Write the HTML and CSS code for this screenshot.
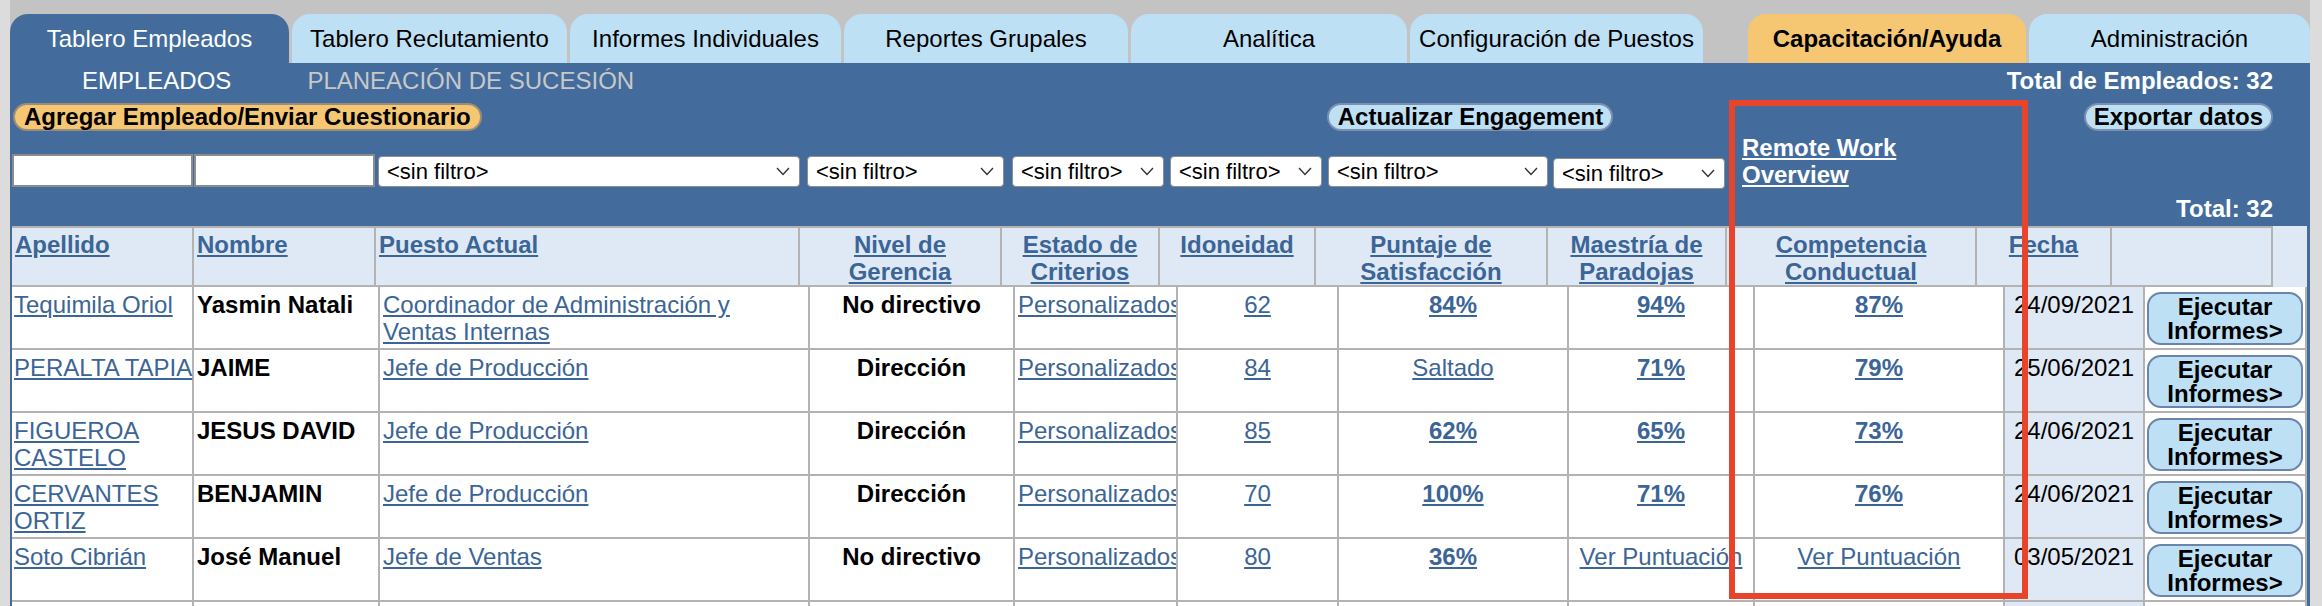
FILE: index.html
```html
<!DOCTYPE html>
<html lang="es">
<head>
    <meta charset="UTF-8">
    <meta name="viewport" content="width=device-width, initial-scale=1.0">
    <title>Tablero Empleados</title>
    <link rel="stylesheet" href="styles.css">
</head>
<body>
    <div class="app">
        <!-- Main tabs -->
        <nav class="tabs">
            <a class="tab tab-active w-emp" href="#">Tablero Empleados</a>
            <a class="tab w-rec" href="#">Tablero Reclutamiento</a>
            <a class="tab w-ind" href="#">Informes Individuales</a>
            <a class="tab w-grp" href="#">Reportes Grupales</a>
            <a class="tab w-ana" href="#">Analítica</a>
            <a class="tab w-conf" href="#">Configuración de Puestos</a>
            <a class="tab tab-help w-help" href="#">Capacitación/Ayuda</a>
            <a class="tab w-adm" href="#">Administración</a>
        </nav>

        <div class="panel">
            <div class="subnav">
                <span class="sub-item sub-current">EMPLEADOS</span>
                <span class="sub-item">PLANEACIÓN DE SUCESIÓN</span>
                <span class="count">Total de Empleados: 32</span>
            </div>

            <div class="actions">
                <button class="pill pill-orange">Agregar Empleado/Enviar Cuestionario</button>
                <button class="pill pill-blue engage">Actualizar Engagement</button>
                <button class="pill pill-blue export">Exportar datos</button>
            </div>

            <!-- Filter row -->
            <div class="filters">
                <input type="text" class="f-text">
                <input type="text" class="f-text">
                <span class="sel s-puesto">
                    <select><option>&lt;sin filtro&gt;</option></select>
                    <svg class="chev" width="14" height="9" viewBox="0 0 14 9"><path d="M1 1l6 6.5L13 1" fill="none" stroke="#333" stroke-width="1.4"/></svg>
                </span>
                <span class="sel s-nivel">
                    <select><option>&lt;sin filtro&gt;</option></select>
                    <svg class="chev" width="14" height="9" viewBox="0 0 14 9"><path d="M1 1l6 6.5L13 1" fill="none" stroke="#333" stroke-width="1.4"/></svg>
                </span>
                <span class="sel s-estado">
                    <select><option>&lt;sin filtro&gt;</option></select>
                    <svg class="chev" width="14" height="9" viewBox="0 0 14 9"><path d="M1 1l6 6.5L13 1" fill="none" stroke="#333" stroke-width="1.4"/></svg>
                </span>
                <span class="sel s-idon">
                    <select><option>&lt;sin filtro&gt;</option></select>
                    <svg class="chev" width="14" height="9" viewBox="0 0 14 9"><path d="M1 1l6 6.5L13 1" fill="none" stroke="#333" stroke-width="1.4"/></svg>
                </span>
                <span class="sel s-punt">
                    <select><option>&lt;sin filtro&gt;</option></select>
                    <svg class="chev" width="14" height="9" viewBox="0 0 14 9"><path d="M1 1l6 6.5L13 1" fill="none" stroke="#333" stroke-width="1.4"/></svg>
                </span>
                <span class="sel s-maes">
                    <select><option>&lt;sin filtro&gt;</option></select>
                    <svg class="chev" width="14" height="9" viewBox="0 0 14 9"><path d="M1 1l6 6.5L13 1" fill="none" stroke="#333" stroke-width="1.4"/></svg>
                </span>
                <a class="remote" href="#">Remote Work Overview</a>
            </div>

            <div class="total">Total: 32</div>

            <!-- Column headers -->
            <div class="head-wrap">
                <table class="head-table">
                    <colgroup>
                        <col class="h1"><col class="h2"><col class="h3"><col class="h4">
                        <col class="h5"><col class="h6"><col class="h7"><col class="h8">
                        <col class="h9"><col class="h10"><col class="h11">
                    </colgroup>
                    <tr>
                        <th class="left"><a href="#">Apellido</a></th>
                        <th class="left"><a href="#">Nombre</a></th>
                        <th class="left"><a href="#">Puesto Actual</a></th>
                        <th><a href="#">Nivel de Gerencia</a></th>
                        <th><a href="#">Estado de Criterios</a></th>
                        <th><a href="#">Idoneidad</a></th>
                        <th><a href="#">Puntaje de Satisfacción</a></th>
                        <th><a href="#">Maestría de Paradojas</a></th>
                        <th><a href="#">Competencia Conductual</a></th>
                        <th><a href="#">Fecha</a></th>
                        <th></th>
                    </tr>
                </table>
            </div>

            <!-- Employees -->
            <table class="body-table">
                <colgroup>
                    <col class="b1"><col class="b2"><col class="b3"><col class="b4">
                    <col class="b5"><col class="b6"><col class="b7"><col class="b8">
                    <col class="b9"><col class="b10"><col class="b11">
                </colgroup>
                <tr>
                    <td><a href="#">Tequimila Oriol</a></td>
                    <td class="strong">Yasmin Natali</td>
                    <td><a href="#">Coordinador de Administración y Ventas Internas</a></td>
                    <td class="strong center">No directivo</td>
                    <td class="clip"><a href="#">Personalizados</a></td>
                    <td class="center"><a href="#">62</a></td>
                    <td class="center"><a class="pct" href="#">84%</a></td>
                    <td class="center"><a class="pct" href="#">94%</a></td>
                    <td class="center"><a class="pct" href="#">87%</a></td>
                    <td class="date">24/09/2021</td>
                    <td class="run"><button class="run-btn">Ejecutar Informes&gt;</button></td>
                </tr>
                <tr>
                    <td class="nowrap"><a href="#">PERALTA TAPIA</a></td>
                    <td class="strong">JAIME</td>
                    <td><a href="#">Jefe de Producción</a></td>
                    <td class="strong center">Dirección</td>
                    <td class="clip"><a href="#">Personalizados</a></td>
                    <td class="center"><a href="#">84</a></td>
                    <td class="center"><a href="#">Saltado</a></td>
                    <td class="center"><a class="pct" href="#">71%</a></td>
                    <td class="center"><a class="pct" href="#">79%</a></td>
                    <td class="date">25/06/2021</td>
                    <td class="run"><button class="run-btn">Ejecutar Informes&gt;</button></td>
                </tr>
                <tr>
                    <td><a href="#">FIGUEROA CASTELO</a></td>
                    <td class="strong">JESUS DAVID</td>
                    <td><a href="#">Jefe de Producción</a></td>
                    <td class="strong center">Dirección</td>
                    <td class="clip"><a href="#">Personalizados</a></td>
                    <td class="center"><a href="#">85</a></td>
                    <td class="center"><a class="pct" href="#">62%</a></td>
                    <td class="center"><a class="pct" href="#">65%</a></td>
                    <td class="center"><a class="pct" href="#">73%</a></td>
                    <td class="date">24/06/2021</td>
                    <td class="run"><button class="run-btn">Ejecutar Informes&gt;</button></td>
                </tr>
                <tr>
                    <td><a href="#">CERVANTES ORTIZ</a></td>
                    <td class="strong">BENJAMIN</td>
                    <td><a href="#">Jefe de Producción</a></td>
                    <td class="strong center">Dirección</td>
                    <td class="clip"><a href="#">Personalizados</a></td>
                    <td class="center"><a href="#">70</a></td>
                    <td class="center"><a class="pct" href="#">100%</a></td>
                    <td class="center"><a class="pct" href="#">71%</a></td>
                    <td class="center"><a class="pct" href="#">76%</a></td>
                    <td class="date">24/06/2021</td>
                    <td class="run"><button class="run-btn">Ejecutar Informes&gt;</button></td>
                </tr>
                <tr>
                    <td><a href="#">Soto Cibrián</a></td>
                    <td class="strong">José Manuel</td>
                    <td><a href="#">Jefe de Ventas</a></td>
                    <td class="strong center">No directivo</td>
                    <td class="clip"><a href="#">Personalizados</a></td>
                    <td class="center"><a href="#">80</a></td>
                    <td class="center"><a class="pct" href="#">36%</a></td>
                    <td class="center"><a href="#">Ver Puntuación</a></td>
                    <td class="center"><a href="#">Ver Puntuación</a></td>
                    <td class="date">03/05/2021</td>
                    <td class="run"><button class="run-btn">Ejecutar Informes&gt;</button></td>
                </tr>
                <tr>
                    <td></td><td></td><td></td><td></td><td></td><td></td>
                    <td></td><td></td><td></td><td class="date"></td>
                    <td class="run"><span class="run-stub"></span></td>
                </tr>
            </table>
        </div>
    </div>

    <!-- Highlight box drawn over the screenshot -->
    <div class="annotation"></div>
</body>
</html>
```

FILE: styles.css
```css
/* Employee dashboard */
body {
    margin: 0;
    background: #dcdcdc;
    font-family: "Liberation Sans", Arial, sans-serif;
    color: #000;
}

.app {
    width: 2300px;
    margin-left: 10px;
}

a {
    color: #3b6597;
    text-decoration: underline;
}

/* Tabs */
.tabs {
    display: flex;
    gap: 3px;
    padding-top: 14px;
    background: #c3c3c3;
}

.tab {
    height: 49px;
    display: flex;
    align-items: center;
    justify-content: center;
    border-radius: 18px 18px 0 0;
    background: #bee0f5;
    color: #000;
    font-size: 24px;
    text-decoration: none;
    white-space: nowrap;
}

.tab-active {
    background: #436c9c;
    color: #fff;
}

.tab-help {
    background: #f5c773;
    font-weight: bold;
}

.w-emp { width: 279px; }
.w-rec { width: 275px; }
.w-ind { width: 271px; }
.w-grp { width: 284px; }
.w-ana { width: 276px; }
.w-conf { width: 293px; }
.w-help { width: 278px; margin-left: 42px; }
.w-adm { width: 281px; }

/* Blue panel */
.panel {
    background: #436c9c;
    padding: 0 3px 40px 2px;
}

.subnav {
    height: 36px;
    display: flex;
    align-items: center;
    padding: 0 34px 0 32px;
    font-size: 24px;
}

.sub-item {
    padding: 0 38px;
    color: #c8c8c8;
}

.sub-current {
    color: #fff;
}

.count {
    margin-left: auto;
    color: #fff;
    font-weight: bold;
}

.actions {
    height: 35px;
    display: flex;
    align-items: center;
    padding: 0 34px 0 1px;
}

.pill {
    height: 28px;
    padding: 0 9px;
    border-radius: 14px;
    font-family: inherit;
    font-size: 24px;
    font-weight: bold;
    line-height: 24px;
    color: #000;
    white-space: nowrap;
}

.pill-orange {
    background: #f5c773;
    border: 2px solid #9b8d78;
}

.pill-blue {
    background: #bee0f5;
    border: 2px solid #7d8fb1;
}

.engage {
    margin-left: 845px;
    width: 286px;
}

.export {
    margin-left: auto;
    padding: 0 8px;
}

/* Filters */
.filters {
    height: 58px;
    display: flex;
    align-items: flex-start;
}

.f-text {
    width: 181px;
    height: 33px;
    margin: 20px 1px 0 0;
    box-sizing: border-box;
    border: 2px solid #8c8c8c;
    background: #fff;
}

.sel {
    position: relative;
    display: inline-block;
    margin-top: 22px;
}

.sel select {
    appearance: none;
    -webkit-appearance: none;
    width: 100%;
    height: 31px;
    padding: 0 8px;
    border: 1px solid #8f8f8f;
    border-radius: 4px;
    background: #fff;
    font-family: inherit;
    font-size: 22px;
    color: #000;
}

.chev {
    position: absolute;
    right: 10px;
    top: 11px;
    pointer-events: none;
}

.s-puesto { width: 422px; margin-left: 2px; }
.s-nivel { width: 197px; margin-left: 7px; }
.s-estado { width: 152px; margin-left: 8px; }
.s-idon { width: 152px; margin-left: 6px; }
.s-punt { width: 220px; margin-left: 6px; }
.s-maes { width: 172px; margin-left: 5px; margin-top: 24px; }

.remote {
    width: 200px;
    margin-left: 17px;
    color: #fff;
    font-size: 24px;
    font-weight: bold;
    line-height: 27px;
}

.total {
    height: 34px;
    line-height: 34px;
    padding-right: 34px;
    text-align: right;
    color: #fff;
    font-size: 24px;
    font-weight: bold;
}

/* Header table */
.head-wrap {
    background: #dfe9f5;
}

.head-table,
.body-table {
    border-collapse: separate;
    border-spacing: 0;
    table-layout: fixed;
}

.head-table {
    width: 2261px;
}

.head-table th {
    padding: 3px 3px 0;
    border-top: 2px solid #b3b3b3;
    border-bottom: 2px solid #b3b3b3;
    border-right: 2px solid #b3b3b3;
    vertical-align: top;
    text-align: center;
    font-size: 24px;
    line-height: 27px;
    height: 54px;
}

.head-table th.left {
    text-align: left;
}

.h1 { width: 182px; }
.h2 { width: 182px; }
.h3 { width: 424px; }
.h4 { width: 202px; }
.h5 { width: 158px; }
.h6 { width: 156px; }
.h7 { width: 232px; }
.h8 { width: 179px; }
.h9 { width: 250px; }
.h10 { width: 135px; }
.h11 { width: 161px; }

/* Body table */
.body-table {
    width: 100%;
}

.body-table td {
    padding: 4px 3px 0;
    border-right: 2px solid #b3b3b3;
    border-bottom: 2px solid #b3b3b3;
    background: #fff;
    vertical-align: top;
    font-size: 24px;
    line-height: 27px;
}

.b1 { width: 182px; }
.b2 { width: 186px; }
.b3 { width: 430px; }
.b4 { width: 205px; }
.b5 { width: 163px; }
.b6 { width: 161px; }
.b7 { width: 230px; }
.b8 { width: 186px; }
.b9 { width: 250px; }
.b10 { width: 140px; }
.b11 { width: 162px; }

.body-table td:first-child {
    padding-left: 2px;
}

.body-table td.nowrap {
    white-space: nowrap;
    padding-right: 0;
}

.strong {
    font-weight: bold;
}

.center {
    text-align: center;
}

.pct {
    font-weight: bold;
}

.clip {
    white-space: nowrap;
    overflow: hidden;
}

.body-table td.date {
    background: #dfe9f5;
    text-align: center;
}

.body-table td.run {
    padding: 5px 0 3px;
    text-align: center;
}

.run-btn,
.run-stub {
    width: 156px;
    height: 53px;
    padding: 0;
    border: 2px solid #6c84ab;
    border-radius: 14px;
    background: #bee0f5;
    font-family: inherit;
    font-size: 24px;
    font-weight: bold;
    line-height: 24px;
    color: #000;
}

.run-stub {
    display: inline-block;
    box-sizing: border-box;
    vertical-align: top;
}

/* Red highlight */
.annotation {
    position: absolute;
    left: 1729px;
    top: 100px;
    width: 299px;
    height: 499px;
    box-sizing: border-box;
    border: 6px solid #e8442c;
}
```
